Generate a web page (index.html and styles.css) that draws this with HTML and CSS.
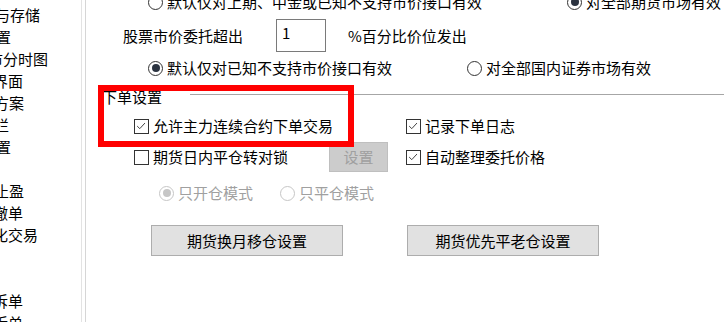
FILE: index.html
```html
<!DOCTYPE html>
<html lang="zh-CN">
<head>
<meta charset="utf-8">
<title>下单设置</title>
<link rel="stylesheet" href="styles.css">
</head>
<body>
<div class="window">
  <aside class="nav">
    <div class="nav-item"><span class="cut-5">与存储</span></div>
    <div class="nav-item"><span class="cut-4">置</span></div>
    <div class="nav-item"><span class="cut-12">市分时图</span></div>
    <div class="nav-item"><span class="cut-7">界面</span></div>
    <div class="nav-item"><span class="cut-6">方案</span></div>
    <div class="nav-item"><span class="cut-6">栏</span></div>
    <div class="nav-item"><span class="cut-4">置</span></div>
    <div class="nav-item"></div>
    <div class="nav-item"><span class="cut-6">止盈</span></div>
    <div class="nav-item"><span class="cut-7">撤单</span></div>
    <div class="nav-item"><span class="cut-7">化交易</span></div>
    <div class="nav-item"></div>
    <div class="nav-item"></div>
    <div class="nav-item"><span class="cut-7">拆单</span></div>
    <div class="nav-item"><span class="cut-7">拆单</span></div>
  </aside>
  <div class="sep"></div>
  <main class="panel">
    <div class="row row-a">
      <label class="opt cell-a"><span class="radio"></span><span>默认仅对上期、中金或已知不支持市价接口有效</span></label>
      <label class="opt"><span class="radio on"></span><span>对全部期货市场有效</span></label>
    </div>
    <div class="row row-b">
      <span class="cell-b">股票市价委托超出</span>
      <input class="num" type="text" value="1">
      <span class="suffix">%百分比价位发出</span>
    </div>
    <div class="row row-c">
      <label class="opt cell-c"><span class="radio on"></span><span>默认仅对已知不支持市价接口有效</span></label>
      <label class="opt"><span class="radio"></span><span>对全部国内证券市场有效</span></label>
    </div>

    <section class="group">
      <div class="legend-row">
        <span class="legend">下单设置</span>
        <span class="rule"></span>
      </div>
      <div class="row row-d">
        <label class="opt cell-d"><span class="check on"><svg viewBox="0 0 15 15" width="13" height="13"><polyline points="2.5,7 5.5,10 11.5,3.5" fill="none" stroke="#3a3a3a" stroke-width="1.1"/></svg></span><span>允许主力连续合约下单交易</span></label>
        <label class="opt"><span class="check on"><svg viewBox="0 0 15 15" width="13" height="13"><polyline points="2.5,7 5.5,10 11.5,3.5" fill="none" stroke="#3a3a3a" stroke-width="1.1"/></svg></span><span>记录下单日志</span></label>
      </div>
      <div class="row row-e">
        <div class="cell-d cell-flex">
          <label class="opt"><span class="check"></span><span>期货日内平仓转对锁</span></label>
          <button class="btn btn-disabled" disabled>设置</button>
        </div>
        <label class="opt"><span class="check on"><svg viewBox="0 0 15 15" width="13" height="13"><polyline points="2.5,7 5.5,10 11.5,3.5" fill="none" stroke="#3a3a3a" stroke-width="1.1"/></svg></span><span>自动整理委托价格</span></label>
      </div>
      <div class="row row-f">
        <label class="opt disabled cell-f"><span class="radio on"></span><span>只开仓模式</span></label>
        <label class="opt disabled"><span class="radio"></span><span>只平仓模式</span></label>
      </div>
      <div class="row row-g">
        <button class="btn btn-wide">期货换月移仓设置</button>
        <button class="btn btn-wide">期货优先平老仓设置</button>
      </div>
    </section>

    <div class="highlight"></div>
  </main>
</div>
</body>
</html>
```

FILE: styles.css
```css
* { box-sizing: border-box; }

html, body {
  margin: 0;
  padding: 0;
  background: #ffffff;
  overflow: hidden;
}

body {
  font-family: "Noto Sans CJK SC", "Noto Sans", sans-serif;
  font-size: 15px;
  line-height: 22px;
  color: #000000;
}

.window {
  display: flex;
  width: 724px;
  height: 322px;
  overflow: hidden;
}

/* left navigation (clipped) */
.nav {
  width: 81px;
  flex: none;
  padding-top: 4px;
  overflow: hidden;
}

.nav-item {
  height: 22px;
  white-space: nowrap;
}

.nav-item span { display: inline-block; }
.cut-4 { margin-left: -4px; }
.cut-5 { margin-left: -5px; }
.cut-6 { margin-left: -6px; }
.cut-7 { margin-left: -7px; }
.cut-12 { margin-left: -12px; }

.sep {
  width: 5px;
  flex: none;
  border-left: 1px solid #e3e3e3;
  border-right: 1px solid #d6d6d6;
}

/* main panel */
.panel {
  position: relative;
  flex: 1;
  min-width: 0;
}

.row {
  display: flex;
  align-items: center;
  white-space: nowrap;
}

.opt {
  display: flex;
  align-items: center;
  gap: 4px;
}

.radio {
  width: 15px;
  height: 15px;
  border: 1px solid #333333;
  border-radius: 50%;
  display: flex;
  align-items: center;
  justify-content: center;
  flex: none;
  background: #ffffff;
}

.radio.on::after {
  content: "";
  width: 8px;
  height: 8px;
  border-radius: 50%;
  background: #2b3340;
}

.check {
  width: 15px;
  height: 15px;
  border: 1px solid #333333;
  display: flex;
  align-items: center;
  justify-content: center;
  flex: none;
  background: #ffffff;
}

.check svg { display: block; }

.disabled { color: #a0a0a0; }
.disabled .radio { border-color: #c6c6c6; }
.disabled .radio.on::after { background: #c6c6c6; }

/* rows */
.row-a {
  height: 22px;
  margin-top: -9px;
  padding-left: 62px;
}
.cell-a { width: 419px; flex: none; }

.row-b {
  height: 33px;
  margin-top: 6px;
  padding-left: 37px;
}
.cell-b { width: 153px; flex: none; }

.num {
  width: 50px;
  height: 33px;
  border: 1px solid #7a7a7a;
  padding: 0 5px 7px;
  font: inherit;
  line-height: 22px;
  color: #000000;
  background: #ffffff;
  outline: none;
}

.suffix { margin-left: 22px; }

.row-c {
  height: 22px;
  margin-top: 5px;
  padding-left: 62px;
}
.cell-c { width: 319px; flex: none; }

/* group */
.group { margin-top: 7px; }

.legend-row {
  display: flex;
  align-items: flex-start;
  height: 22px;
}

.legend {
  margin-left: 16px;
  white-space: nowrap;
}

.rule {
  flex: 1;
  height: 1px;
  margin-top: 8px;
  margin-left: 28px;
  background: #a6a6a6;
}

.row-d {
  height: 22px;
  margin-top: 7px;
  padding-left: 48px;
}
.cell-d { width: 272px; flex: none; }

.cell-flex {
  display: flex;
  align-items: center;
}

.row-e {
  height: 30px;
  margin-top: 5px;
  padding-left: 48px;
}

.btn {
  font: inherit;
  line-height: 20px;
  color: #000000;
  background: #e1e1e1;
  border: 1px solid #adadad;
  padding: 0;
  margin: 0;
  border-radius: 0;
}

.btn-disabled {
  width: 59px;
  height: 30px;
  margin-left: auto;
  margin-right: 18px;
  background: #cccccc;
  border-color: #bfbfbf;
  color: #a0a0a0;
}

.row-f {
  height: 22px;
  margin-top: 10px;
  padding-left: 73px;
}
.cell-f { width: 121px; flex: none; }

.row-g {
  height: 31px;
  margin-top: 21px;
  padding-left: 65px;
  gap: 64px;
}

.btn-wide {
  width: 192px;
  height: 31px;
}

/* annotation overlay */
.highlight {
  position: absolute;
  left: 12px;
  top: 85px;
  width: 256px;
  height: 62px;
  border: 6px solid #ff0000;
  pointer-events: none;
}
```
